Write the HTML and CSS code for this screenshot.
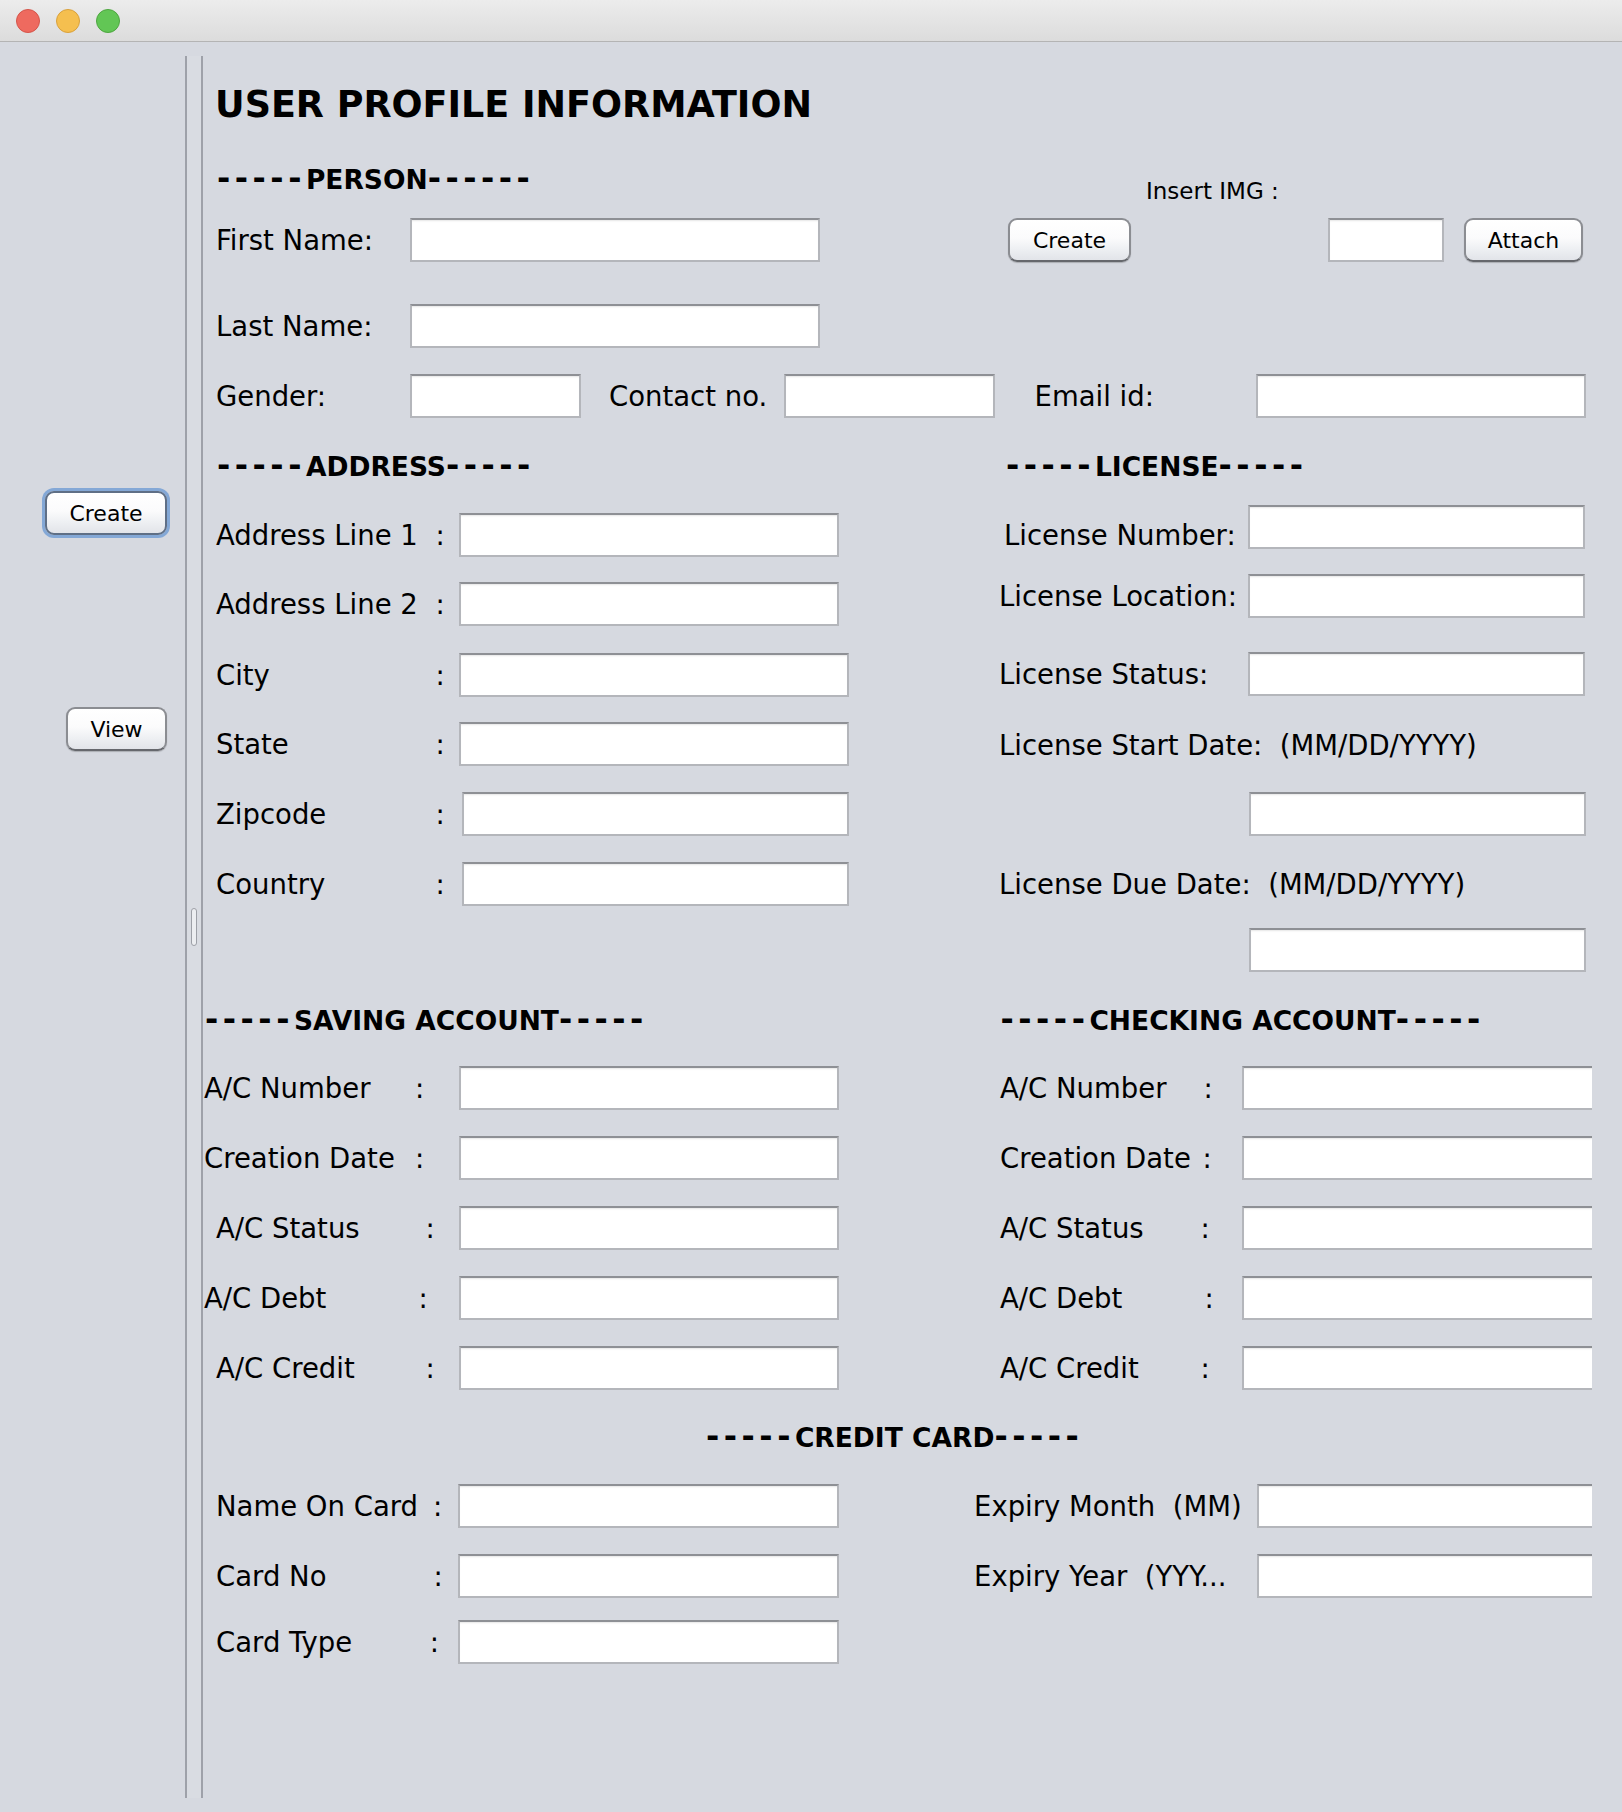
FILE: index.html
```html
<!DOCTYPE html>
<html lang="en">
<head>
<meta charset="utf-8">
<title>User Profile Information</title>
<link rel="stylesheet" href="styles.css">
</head>
<body>
<div class="window">
  <header class="titlebar">
    <span class="light light-close"></span>
    <span class="light light-min"></span>
    <span class="light light-max"></span>
  </header>
  <div class="split">
    <aside class="side">
      <button class="btn btn-side btn-focus">Create</button>
      <button class="btn btn-view">View</button>
    </aside>
    <div class="divider"><span class="grip"></span></div>
    <main class="main">
      <h1 class="title">USER PROFILE INFORMATION</h1>

      <div class="row head-row person-head">
        <div class="head head-person"><span class="dash">-----</span>PERSON<span class="dash">------</span></div>
        <div class="insert-label">Insert IMG :</div>
      </div>

      <div class="row person-row first-row">
        <label class="lbl k-person">First Name:</label>
        <input class="field f-name" type="text">
        <button class="btn btn-create">Create</button>
        <input class="field f-img" type="text">
        <button class="btn btn-attach">Attach</button>
      </div>
      <div class="row person-row last-row">
        <label class="lbl k-person">Last Name:</label>
        <input class="field f-name" type="text">
      </div>
      <div class="row person-row gender-row">
        <label class="lbl k-person">Gender:</label>
        <input class="field f-gender" type="text">
        <label class="lbl k-contact">Contact no.</label>
        <input class="field f-contact" type="text">
        <label class="lbl k-email">Email id:</label>
        <input class="field f-email" type="text">
      </div>

      <div class="row head-row address-head">
        <div class="head head-address"><span class="dash">-----</span>ADDRESS<span class="dash">-----</span></div>
        <div class="head"><span class="dash">-----</span>LICENSE<span class="dash">-----</span></div>
      </div>

      <div class="section sec-address">
        <div class="col addr-left">
          <div class="row r-a1"><label class="lbl k-addr">Address Line 1</label><span class="colon">:</span><input class="field f-addr" type="text"></div>
          <div class="row r-a2"><label class="lbl k-addr">Address Line 2</label><span class="colon">:</span><input class="field f-addr" type="text"></div>
          <div class="row r-city"><label class="lbl k-addr">City</label><span class="colon">:</span><input class="field f-city" type="text"></div>
          <div class="row r-state"><label class="lbl k-addr">State</label><span class="colon">:</span><input class="field f-city" type="text"></div>
          <div class="row r-zip"><label class="lbl k-addr">Zipcode</label><span class="colon">:</span><input class="field f-zip" type="text"></div>
          <div class="row r-country"><label class="lbl k-addr">Country</label><span class="colon">:</span><input class="field f-zip" type="text"></div>
        </div>
        <div class="col lic-right">
          <div class="row r-lnum"><label class="lbl k-lnum">License Number:</label><input class="field f-lic" type="text"></div>
          <div class="row r-lloc"><label class="lbl k-lic">License Location:</label><input class="field f-lic" type="text"></div>
          <div class="row r-lstat"><label class="lbl k-lic">License Status:</label><input class="field f-lic" type="text"></div>
          <div class="row label-row r-lstart"><label class="lbl">License Start Date:  (MM/DD/YYYY)</label></div>
          <div class="row r-lstartf"><input class="field f-lic f-lic-off" type="text"></div>
          <div class="row label-row r-ldue"><label class="lbl">License Due Date:  (MM/DD/YYYY)</label></div>
          <div class="row r-lduef"><input class="field f-lic f-lic-off" type="text"></div>
        </div>
      </div>

      <div class="row head-row account-head">
        <div class="head head-saving"><span class="dash">-----</span>SAVING ACCOUNT<span class="dash">-----</span></div>
        <div class="head"><span class="dash">-----</span>CHECKING ACCOUNT<span class="dash">-----</span></div>
      </div>

      <div class="section sec-accounts">
        <div class="col acc-left">
          <div class="row"><label class="lbl k-acn">A/C Number</label><span class="colon">:</span><input class="field f-acc m35" type="text"></div>
          <div class="row acc-row"><label class="lbl k-acn">Creation Date</label><span class="colon">:</span><input class="field f-acc m35" type="text"></div>
          <div class="row acc-row"><label class="lbl k-acs">A/C Status</label><span class="colon">:</span><input class="field f-acc m24" type="text"></div>
          <div class="row acc-row"><label class="lbl k-acd">A/C Debt</label><span class="colon">:</span><input class="field f-acc m31" type="text"></div>
          <div class="row acc-row"><label class="lbl k-acs">A/C Credit</label><span class="colon">:</span><input class="field f-acc m24" type="text"></div>
        </div>
        <div class="col acc-right">
          <div class="row"><label class="lbl kc-num">A/C Number</label><span class="colon">:</span><input class="field f-chk mc29" type="text"></div>
          <div class="row acc-row"><label class="lbl kc-date">Creation Date</label><span class="colon">:</span><input class="field f-chk mc30" type="text"></div>
          <div class="row acc-row"><label class="lbl kc-stat">A/C Status</label><span class="colon">:</span><input class="field f-chk mc32" type="text"></div>
          <div class="row acc-row"><label class="lbl kc-debt">A/C Debt</label><span class="colon">:</span><input class="field f-chk mc28" type="text"></div>
          <div class="row acc-row"><label class="lbl kc-stat">A/C Credit</label><span class="colon">:</span><input class="field f-chk mc32" type="text"></div>
        </div>
      </div>

      <div class="row head-row credit-head">
        <div class="head"><span class="dash">-----</span>CREDIT CARD<span class="dash">-----</span></div>
      </div>

      <div class="section sec-credit">
        <div class="col card-left">
          <div class="row"><label class="lbl k-noc">Name On Card</label><span class="colon">:</span><input class="field f-card m18" type="text"></div>
          <div class="row card-no"><label class="lbl k-cno">Card No</label><span class="colon">:</span><input class="field f-card m17" type="text"></div>
          <div class="row card-type"><label class="lbl k-ctype">Card Type</label><span class="colon">:</span><input class="field f-card m21" type="text"></div>
        </div>
        <div class="col card-right">
          <div class="row"><label class="lbl k-exp">Expiry Month  (MM)</label><input class="field f-chk" type="text"></div>
          <div class="row card-no"><label class="lbl k-exp">Expiry Year  (YYY...</label><input class="field f-chk" type="text"></div>
        </div>
      </div>
    </main>
  </div>
</div>
</body>
</html>
```

FILE: styles.css
```css
html, body {
  margin: 0;
  padding: 0;
}

body {
  width: 1622px;
  height: 1812px;
  overflow: hidden;
  background: #d6d9e0;
  font-family: "DejaVu Sans", "Liberation Sans", sans-serif;
  color: #000;
}

.window {
  width: 1622px;
  height: 1812px;
  display: flex;
  flex-direction: column;
}

/* ---------- title bar ---------- */
.titlebar {
  height: 41px;
  flex: none;
  display: flex;
  align-items: center;
  gap: 16px;
  padding-left: 16px;
  background: linear-gradient(#ececec, #dcdcdc);
  border-bottom: 1px solid #b4b4b4;
}

.light {
  width: 24px;
  height: 24px;
  border-radius: 50%;
  box-sizing: border-box;
}
.light-close { background: #ee6a5f; border: 1px solid #d5554a; }
.light-min   { background: #f5bf4f; border: 1px solid #d9a13c; }
.light-max   { background: #62c655; border: 1px solid #4ea640; }

/* ---------- split pane ---------- */
.split {
  flex: 1;
  min-height: 0;
  display: flex;
  padding: 14px 0;
  box-sizing: border-box;
}

.side {
  width: 187px;
  flex: none;
  box-sizing: border-box;
  border-right: 2px solid #9ea1a9;
  padding-right: 18px;
  display: flex;
  flex-direction: column;
  align-items: flex-end;
}

.divider {
  width: 14px;
  flex: none;
  display: flex;
  align-items: center;
  justify-content: center;
  background: #d9dce2;
}

.grip {
  width: 6px;
  height: 38px;
  box-sizing: border-box;
  border: 1px solid #9da0a7;
  border-radius: 3px;
  background: #eceef1;
}

.main {
  width: 1391px;
  flex: none;
  box-sizing: border-box;
  border-left: 2px solid #9ea1a9;
  padding-left: 1px;
  overflow: hidden;
}

/* ---------- buttons ---------- */
.btn {
  box-sizing: border-box;
  height: 44px;
  flex: none;
  padding: 0;
  margin: 0;
  border: 2px solid #8b8d92;
  border-bottom-color: #66686d;
  border-radius: 9px;
  background: linear-gradient(#ffffff 0%, #fbfbfc 45%, #eef0f3 72%, #e2e4e9 100%);
  box-shadow: 0 1px 1px rgba(0, 0, 0, 0.2);
  font-family: "DejaVu Sans", "Liberation Sans", sans-serif;
  font-size: 22px;
  color: #000;
}

.btn-side {
  width: 122px;
  margin-top: 435px;
}

.btn-focus {
  border-color: #5f6f86;
  box-shadow: 0 0 0 3px #84a8d6;
}

.btn-view {
  width: 101px;
  margin-top: 172px;
}

.btn-create {
  width: 123px;
  margin-left: 188px;
}

.btn-attach {
  width: 119px;
  margin-left: 20px;
}

/* ---------- text fields ---------- */
.field {
  box-sizing: border-box;
  height: 44px;
  flex: none;
  margin: 0;
  padding: 0;
  border: 2px solid #b4b6bb;
  border-top-color: #8e9095;
  background: #fff;
  box-shadow: inset 0 2px 2px -1px rgba(0, 0, 0, 0.1);
  outline: none;
}

.f-name    { width: 410px; }
.f-img     { width: 116px; margin-left: 197px; }
.f-gender  { width: 171px; }
.f-contact { width: 211px; }
.f-email   { width: 330px; }
.f-addr    { width: 380px; margin-left: 14.5px; }
.f-city    { width: 390px; margin-left: 14.5px; }
.f-zip     { width: 387px; margin-left: 17.5px; }
.f-lic     { width: 337px; }
.f-lic-off { margin-left: 250px; }
.f-acc     { width: 380px; }
.f-chk     { width: 380px; }
.f-card    { width: 381px; }

.m35 { margin-left: 35px; }
.m31 { margin-left: 31.5px; }
.m24 { margin-left: 24.5px; }
.mc29 { margin-left: 29.5px; }
.mc30 { margin-left: 30.5px; }
.mc32 { margin-left: 32.5px; }
.mc28 { margin-left: 28.5px; }
.m18 { margin-left: 16px; }
.m17 { margin-left: 15.5px; }
.m21 { margin-left: 19.3px; }

/* ---------- text ---------- */
.title {
  margin: 24px 0 0 11px;
  height: 50px;
  line-height: 50px;
  font-size: 36.5px;
  font-weight: bold;
  white-space: nowrap;
}

.head {
  flex: none;
  font-size: 26.5px;
  font-weight: bold;
  line-height: 30px;
  white-space: pre;
}

.dash {
  font-size: 32px;
  letter-spacing: 4.5px;
}

.lbl {
  flex: none;
  box-sizing: border-box;
  font-size: 27.5px;
  line-height: 32px;
  white-space: pre;
}

.colon {
  flex: none;
  width: 9px;
  font-size: 27.5px;
  line-height: 32px;
}

.insert-label {
  flex: none;
  margin-top: 24px;
  font-size: 23px;
  line-height: 28px;
  white-space: pre;
}

/* ---------- rows ---------- */
.row {
  display: flex;
  align-items: center;
  height: 44px;
}

.head-row { height: 30px; }
.label-row { height: 30px; }

.person-head { margin-top: 34px; padding-left: 13px; }
.head-person { width: 929px; }

.person-row { padding-left: 12px; }
.first-row { margin-top: 24px; }
.last-row { margin-top: 42px; }
.gender-row { margin-top: 26px; }

.k-person  { width: 194px; }
.k-contact { width: 175px; margin-left: 28px; }
.k-email   { width: 221.5px; margin-left: 39.5px; }

.address-head { margin-top: 33px; padding-left: 13px; }
.head-address { width: 789px; }

.section {
  display: flex;
  align-items: flex-start;
}

.col {
  flex: none;
  box-sizing: border-box;
}

/* address */
.addr-left { width: 794px; padding-left: 12px; }
.r-a1 { margin-top: 32px; }
.r-a2 { margin-top: 25px; }
.r-city { margin-top: 27px; }
.r-state { margin-top: 25px; }
.r-zip { margin-top: 26px; }
.r-country { margin-top: 26px; }
.k-addr { width: 219.5px; }

.lic-right { width: 600px; padding-left: 1px; }
.r-lnum { margin-top: 24px; }
.r-lloc { margin-top: 25px; }
.r-lstat { margin-top: 34px; }
.r-lstart { margin-top: 34px; }
.r-lstartf { margin-top: 32px; }
.r-ldue { margin-top: 33px; }
.r-lduef { margin-top: 29px; }
.k-lnum { width: 244px; margin-left: 5px; margin-top: 16px; }
.k-lic { width: 249px; }

/* accounts */
.account-head { margin-top: 33px; padding-left: 1px; }
.head-saving { width: 795.5px; }

.sec-accounts { margin-top: 31px; }
.acc-left { width: 794px; }
.acc-right { width: 600px; }
.acc-row { margin-top: 26px; }

.k-acn { width: 211px; }
.k-acs { width: 221.5px; padding-left: 12px; }
.k-acd { width: 214.5px; }

.kc-num  { width: 205.5px; padding-left: 2px; }
.kc-date { width: 204.5px; padding-left: 2px; }
.kc-stat { width: 202.5px; padding-left: 2px; }
.kc-debt { width: 206.5px; padding-left: 2px; }

/* credit card */
.credit-head { margin-top: 32px; padding-left: 502px; }

.sec-credit { margin-top: 32px; }
.card-left { width: 769px; padding-left: 12px; }
.card-right { width: 700px; padding-left: 1px; }
.card-no { margin-top: 26px; }
.card-type { margin-top: 22px; }

.k-noc { width: 217px; }
.k-cno { width: 217.5px; }
.k-ctype { width: 213.7px; }
.k-exp { width: 282.5px; }
```
